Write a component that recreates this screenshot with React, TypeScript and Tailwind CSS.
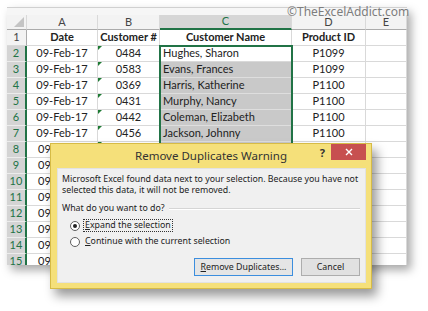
import React from "react";

type Row = { a: string; b: string; c: string; d: string };

const data: Row[] = [
  { a: "09-Feb-17", b: "0484", c: "Hughes, Sharon", d: "P1099" },
  { a: "09-Feb-17", b: "0583", c: "Evans, Frances", d: "P1099" },
  { a: "09-Feb-17", b: "0369", c: "Harris, Katherine", d: "P1100" },
  { a: "09-Feb-17", b: "0431", c: "Murphy, Nancy", d: "P1100" },
  { a: "09-Feb-17", b: "0442", c: "Coleman, Elizabeth", d: "P1100" },
  { a: "09-Feb-17", b: "0456", c: "Jackson, Johnny", d: "P1100" },
  { a: "09", b: "", c: "", d: "" },
  { a: "09", b: "", c: "", d: "" },
  { a: "09", b: "", c: "", d: "" },
  { a: "09", b: "", c: "", d: "" },
  { a: "09", b: "", c: "", d: "" },
  { a: "09", b: "", c: "", d: "" },
  { a: "09", b: "", c: "", d: "" },
  { a: "09", b: "", c: "", d: "" },
];

const cell = "h-[16px] border-r border-b border-[#d9d9d9] flex items-center whitespace-nowrap overflow-hidden";
const head = "h-[15px] bg-[#f3f3f3] border-r border-b border-r-[#d9d9d9] border-b-[#ababab] flex items-center justify-center text-[#444]";

function Sheet() {
  return (
    <div className="relative w-[400px] h-[258px] overflow-hidden bg-white shadow-[4px_5px_9px_rgba(0,0,0,0.35)] [font-family:Lato,sans-serif] text-[11px] text-[#222]">
      <div className="h-[8px] bg-[#f6f6f6] border-t border-[#d0d0d0]" />
      <div className="grid grid-cols-[20px_71px_62px_132px_74px_41px]">
        <div className={head + " relative"}>
          <div className="absolute right-[2px] bottom-[2px] w-0 h-0 border-l-[10px] border-l-transparent border-b-[10px] border-b-[#c4c4c4]" />
        </div>
        <div className={head}>A</div>
        <div className={head}>B</div>
        <div className="h-[15px] bg-[#d6d6d6] border-r border-r-[#d9d9d9] border-b-2 border-b-[#217346] flex items-center justify-center text-[#217346]">C</div>
        <div className={head}>D</div>
        <div className={head}>E</div>

        <div className="h-[16px] bg-[#f3f3f3] border-r border-b border-r-[#ababab] border-b-[#d9d9d9] flex items-center justify-center text-[#444]">1</div>
        <div className={cell + " justify-center font-bold"}>Date</div>
        <div className={cell + " justify-center font-bold"}>Customer #</div>
        <div className={cell + " justify-center font-bold"}>Customer Name</div>
        <div className={cell + " justify-center font-bold"}>Product ID</div>
        <div className={cell} />

        {data.map((r, i) => (
          <React.Fragment key={i}>
            <div className="h-[16px] bg-[#d4d4d4] border-r-2 border-r-[#217346] border-b border-b-[#ececec] flex items-center justify-center text-[#217346]">{i + 2}</div>
            <div className={cell + (r.a.length > 2 ? " justify-center" : " pl-[11px]")}>{r.a}</div>
            <div className={cell + " justify-center relative"}>
              <div className="absolute left-0 top-0 w-0 h-0 border-t-[4px] border-t-[#1e7b34] border-r-[4px] border-r-transparent" />
              {r.b}
            </div>
            <div className={cell + (i === 0 ? " bg-white" : " bg-[#c9c9c9] border-b-[#dedede]") + " pl-[3px]"}>{r.c}</div>
            <div className={cell + " justify-center"}>{r.d}</div>
            <div className={cell} />
          </React.Fragment>
        ))}
      </div>
      <div className="pointer-events-none absolute left-[152px] top-[38px] w-[134px] h-[260px] border-2 border-[#217346]" />
    </div>
  );
}

function Radio({ checked }: { checked?: boolean }) {
  return (
    <div className="w-[10px] h-[10px] rounded-full border border-[#5f5f5f] bg-white flex items-center justify-center shrink-0">
      {checked && <div className="w-[4px] h-[4px] rounded-full bg-[#222]" />}
    </div>
  );
}

function Dialog() {
  return (
    <div className="absolute left-[50px] top-[143px] w-[322px] h-[146px] bg-[#f5e07a] border border-[#d6bb46] shadow-[5px_7px_10px_rgba(0,0,0,0.4)] flex flex-col [font-family:'Noto_Sans',sans-serif] text-[#222]">
      <div className="relative h-[24px] flex items-center justify-center text-[11.5px] text-[#333]">
        Remove Duplicates Warning
        <div className="absolute right-[46px] top-[2px] text-[11px] font-bold leading-[14px]">?</div>
        <div className="absolute right-[5px] top-0 w-[35px] h-[16px] bg-[#c75050] flex items-center justify-center">
          <svg width="8" height="8" viewBox="0 0 8 8">
            <path d="M1 1 L7 7 M7 1 L1 7" stroke="white" strokeWidth="1.4" />
          </svg>
        </div>
      </div>
      <div className="flex-1 ml-[6px] mr-[5px] mb-[5px] bg-[#f0f0f0] border border-[#e2e2e2] pl-[4px] pr-[5px] pt-[5px] flex flex-col text-[8.8px] leading-[11px]">
        <div>
          Microsoft Excel found data next to your selection. Because you have not
          <br />
          selected this data, it will not be removed.
        </div>
        <div className="mt-[7px] flex items-center gap-[4px]">
          <span>What do you want to do?</span>
          <div className="flex-1 h-[2px] border-t border-[#d5d5d5] border-b border-b-white" />
        </div>
        <div className="mt-[5px] ml-[8px] flex flex-col gap-[4px]">
          <div className="flex items-center gap-[3px] h-[13px]">
            <Radio checked />
            <span className="border border-dotted border-[#333] px-[1px] leading-[11px]">
              <span className="underline">E</span>xpand the selection
            </span>
          </div>
          <div className="flex items-center gap-[3px] h-[11px]">
            <Radio />
            <span className="px-[2px]">
              <span className="underline">C</span>ontinue with the current selection
            </span>
          </div>
        </div>
        <div className="mt-auto mb-[6px] flex justify-end gap-[8px]">
          <div className="w-[99px] h-[18px] border border-[#3c8ede] bg-[#e5e5e5] flex items-center justify-center">
            <span><span className="underline">R</span>emove Duplicates...</span>
          </div>
          <div className="w-[59px] h-[18px] border border-[#adadad] bg-[#e1e1e1] flex items-center justify-center">
            Cancel
          </div>
        </div>
      </div>
    </div>
  );
}

export default function App() {
  return (
    <div className="relative w-[428px] h-[311px] bg-white overflow-hidden">
      <div className="pt-[7px] pl-[7px]">
        <Sheet />
      </div>
      <div className="absolute left-[287px] top-[4px] text-[12px] leading-[16px] text-[#7d7d7d] [font-family:'Noto_Sans',sans-serif]">
        ©TheExcelAddict.com
      </div>
      <Dialog />
    </div>
  );
}
